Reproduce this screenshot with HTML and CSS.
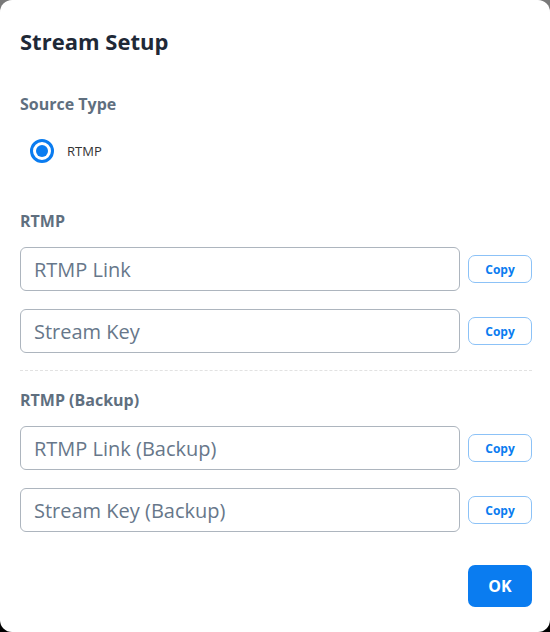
FILE: index.html
```html
<!DOCTYPE html>
<html>
<head>
<meta charset="utf-8">
<link rel="stylesheet" href="styles.css">
</head>
<body>
<div class="modal">
  <h1 class="title">Stream Setup</h1>
  <div class="section-label source-label">Source Type</div>
  <label class="radio-row">
    <span class="radio"><span class="dot"></span></span>
    <span class="radio-text">RTMP</span>
  </label>
  <div class="section-label rtmp-label">RTMP</div>
  <div class="field-row">
    <div class="input">RTMP Link</div>
    <button class="copy">Copy</button>
  </div>
  <div class="field-row">
    <div class="input">Stream Key</div>
    <button class="copy">Copy</button>
  </div>
  <div class="divider"></div>
  <div class="section-label backup-label">RTMP (Backup)</div>
  <div class="field-row">
    <div class="input">RTMP Link (Backup)</div>
    <button class="copy">Copy</button>
  </div>
  <div class="field-row">
    <div class="input">Stream Key (Backup)</div>
    <button class="copy">Copy</button>
  </div>
  <div class="footer">
    <button class="ok">OK</button>
  </div>
</div>
</body>
</html>
```
FILE: styles.css
```css
html, body {
  margin: 0;
  padding: 0;
  height: 100%;
}
body {
  background: linear-gradient(to bottom, #7a7a7a 0%, #3a3a3a 50%, #000 100%);
  font-family: "Open Sans", sans-serif;
}
.modal {
  box-sizing: border-box;
  width: 550px;
  height: 632px;
  background: #fff;
  border-radius: 12px;
  padding: 25px 18px 0 20px;
  display: flex;
  flex-direction: column;
}
.title {
  margin: 0;
  font-size: 22px;
  line-height: 32px;
  font-weight: 700;
  color: #1f2937;
}
.section-label {
  font-size: 16px;
  line-height: 22px;
  font-weight: 700;
  color: #5f6f7f;
}
.source-label {
  margin-top: 36px;
}
.radio-row {
  display: flex;
  align-items: center;
  margin: 23px 0 0 10px;
  height: 26px;
}
.radio {
  box-sizing: border-box;
  width: 24px;
  height: 24px;
  border: 3px solid #0a7cf0;
  border-radius: 50%;
  display: flex;
  align-items: center;
  justify-content: center;
}
.dot {
  width: 12px;
  height: 12px;
  border-radius: 50%;
  background: #0a7cf0;
}
.radio-text {
  margin-left: 13px;
  font-size: 13px;
  color: #333;
}
.rtmp-label {
  margin-top: 46px;
}
.field-row {
  display: flex;
  align-items: center;
  gap: 8px;
  margin-top: 18px;
}
.rtmp-label + .field-row,
.backup-label + .field-row {
  margin-top: 15px;
}
.input {
  box-sizing: border-box;
  width: 440px;
  height: 44px;
  border: 1px solid #adb5be;
  border-radius: 6px;
  padding-left: 13px;
  display: flex;
  align-items: center;
  font-size: 20px;
  color: #67778a;
}
.copy {
  box-sizing: border-box;
  width: 64px;
  height: 28px;
  border: 1px solid #8cc2f7;
  border-radius: 7px;
  background: #fff;
  color: #0a7cf0;
  font-family: "Open Sans", sans-serif;
  font-size: 12px;
  font-weight: 700;
  padding: 0;
}
.divider {
  margin-top: 17px;
  border-top: 1px dashed #e2e2e2;
}
.backup-label {
  margin-top: 18px;
}
.footer {
  display: flex;
  justify-content: flex-end;
  margin-top: 33px;
}
.ok {
  box-sizing: border-box;
  width: 64px;
  height: 42px;
  border: none;
  border-radius: 7px;
  background: #0a7cf0;
  color: #fff;
  font-family: "Open Sans", sans-serif;
  font-size: 16px;
  font-weight: 700;
  padding: 0;
}
```
